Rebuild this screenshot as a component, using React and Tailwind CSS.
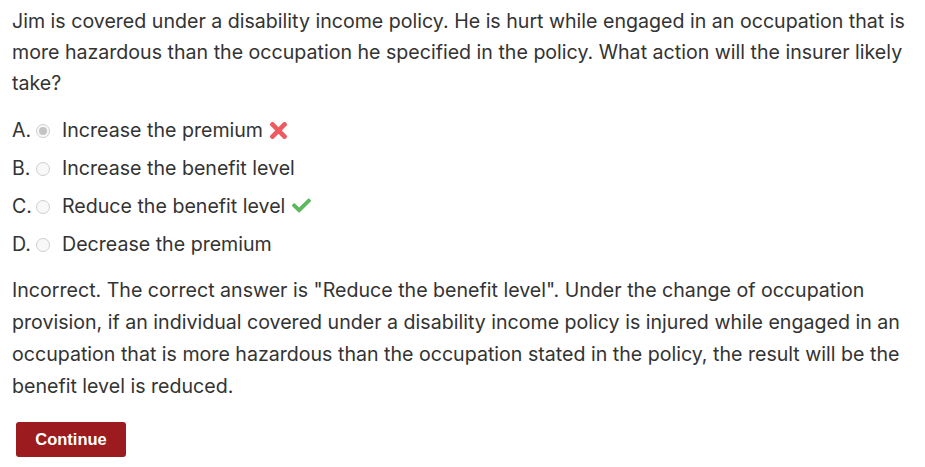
import { FaTimes, FaCheck } from "react-icons/fa"

const options = [
    { letter: "A.", text: "Increase the premium", selected: true, mark: "wrong" },
    { letter: "B.", text: "Increase the benefit level" },
    { letter: "C.", text: "Reduce the benefit level", mark: "right" },
    { letter: "D.", text: "Decrease the premium" },
]

const Radio = ({ selected }) => (
    <span className="flex h-[14px] w-[14px] items-center justify-center rounded-full border border-[#cfcfcf] bg-[#f8f8f8]">
        {selected && <span className="h-[8px] w-[8px] rounded-full bg-[#c4c4c4]" />}
    </span>
)

export default function App() {
    return (
        <div className="bg-white px-3 pt-[6px] font-['Inter',sans-serif] text-[19.6px] text-[#333]">
            <p className="leading-[31px]">
                Jim is covered under a disability income policy. He is hurt while engaged in an occupation that is more hazardous than the occupation he specified in the policy. What action will the insurer likely take?
            </p>

            <ul className="mt-[13px] flex flex-col">
                {options.map((o) => (
                    <li key={o.letter} className="flex h-[38px] items-center">
                        <span className="w-[24px]">{o.letter}</span>
                        <Radio selected={o.selected} />
                        <span className="ml-[12px]">{o.text}</span>
                        {o.mark === "wrong" && <FaTimes className="ml-[3px] -mt-[2px] text-[#ee5a60]" size={25} />}
                        {o.mark === "right" && <FaCheck className="ml-[7px] -mt-[3px] text-[#5cb85c]" size={19} />}
                    </li>
                ))}
            </ul>

            <p className="mt-[10px] leading-[32px]">
                Incorrect. The correct answer is "Reduce the benefit level". Under the change of occupation provision, if an individual covered under a disability income policy is injured while engaged in an occupation that is more hazardous than the occupation stated in the policy, the result will be the benefit level is reduced.
            </p>

            <button className="mt-[20px] ml-1 h-[35px] w-[110px] rounded-[3px] bg-[#9b1b1f] font-['Liberation_Sans',Arial,sans-serif] text-[16.5px] font-bold text-white">
                Continue
            </button>
        </div>
    )
}
